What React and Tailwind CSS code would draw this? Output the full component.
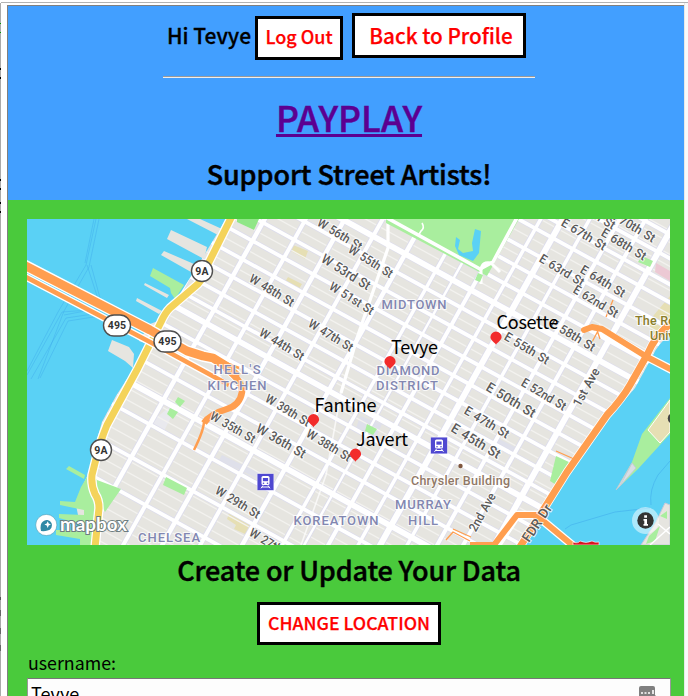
const UI_FONT = "font-['Noto_Sans_CJK_SC','Noto_Sans',sans-serif]";
const HEAVY = "font-medium [-webkit-text-stroke:0.45px_currentColor]";

// Avenue x positions measured at y = 415, with stroke widths.
const AVENUES = [
  [112, 3], [155, 4.5], [196, 4], [235, 4.5], [273, 4], [315, 4.5], [355, 3.5],
  [377, 2.5], [401, 4], [431, 3.5], [453, 6], [480, 3.5], [510, 4], [536, 4], [567, 6],
];

const lineSet = (from, to, step) => {
  const out = [];
  for (let c = from; c < to; c += step) out.push(c);
  return out;
};
const MINOR = lineSet(-246, 500, 12);
const STREETS = [-240, -210, -186, -160, -134, -110, -84, -66, -40, -18, 6, 54, 78, 102, 126, 149, 172, 192, 234, 258, 282, 342, 385, 425];
const MAJOR = [31, 210, 311];

const STREET_LABELS = [
  ["W 56th St", 340, 234, 31, 13], ["W 55th St", 371, 261, 32, 13], ["W 53rd St", 346, 272, 32, 14],
  ["W 51st St", 352, 298, 32, 13], ["W 48th St", 272, 290, 31, 13], ["W 47th St", 331, 335, 31, 13],
  ["W 44th St", 282, 344, 31, 13], ["W 39th St", 288, 410, 31, 13], ["W 35th St", 233, 427, 30, 13],
  ["W 36th St", 281, 441, 30, 14], ["W 38th St", 329, 445, 31, 13], ["W 29th St", 238, 502, 31, 13],
  ["W 27th St", 272, 544, 31, 13], ["E 67th St", 584, 234, 31, 13], ["E 70th St", 633, 226, 31, 13],
  ["E 69th St", 593, 213, 31, 13], ["E 68th St", 624, 244, 31, 13], ["E 63rd St", 562, 270, 31, 13],
  ["E 64th St", 603, 281, 31, 13], ["E 62nd St", 596, 301, 31, 13], ["E 58th St", 573, 335, 31, 13],
  ["E 55th St", 527, 348, 31, 13], ["E 52nd St", 544, 394, 31, 13], ["E 50th St", 511, 400, 31, 14],
  ["E 47th St", 487, 422, 31, 13], ["E 45th St", 476, 441, 31, 14], ["1st Ave", 586, 387, -61, 13],
  ["2nd Ave", 482, 512, -61, 13], ["FDR Dr", 537, 523, -56, 14],
];

const AREAS = [
  ["MIDTOWN", 414, 309, 65], ["DIAMOND", 408, 375, 63], ["DISTRICT", 407, 390, 62], ["HELL'S", 237, 374, 47],
  ["KITCHEN", 237, 390, 59], ["KOREATOWN", 336, 524.5, 85], ["MURRAY", 423, 509, 56], ["HILL", 423, 525, 30],
  ["CHELSEA", 169, 542, 62],
];

const ARTISTS = [
  ["Tevye", 390, 362, 391, 354, 47], ["Fantine", 313.5, 420, 314.5, 412, 62],
  ["Javert", 355.5, 454.5, 356, 446, 52], ["Cosette", 496, 337.5, 496.5, 329, 62],
];

function Shield({ x, y, label, rx, ry }) {
  return (
    <g>
      <rect x={x - rx} y={y - ry} width={rx * 2} height={ry * 2} rx={ry} fill="#fff" stroke="#4f4f4f" strokeWidth="1.4" />
      <text x={x} y={y + 3.7} textAnchor="middle" fontSize="10.5" fontWeight="700" fill="#333" letterSpacing=".2">{label}</text>
    </g>
  );
}

function Station({ x, y }) {
  return (
    <g transform={`translate(${x} ${y})`}>
      <rect x="-8.3" y="-8.3" width="16.6" height="16.6" fill="#4f48d1" stroke="#fff" strokeOpacity=".6" strokeWidth=".6" />
      <rect x="-4" y="-6" width="8" height="9" rx="1.5" fill="#fff" />
      <rect x="-2.6" y="-4" width="5.2" height="3.2" fill="#4f48d1" />
      <circle cx="-2" cy="1.2" r=".8" fill="#4f48d1" />
      <circle cx="2" cy="1.2" r=".8" fill="#4f48d1" />
      <path d="M-2.5 3.5-4.5 6.3M2.5 3.5 4.5 6.3M-3.6 5h7.2" stroke="#fff" strokeWidth="1" />
    </g>
  );
}

function CityMap() {
  const street = (c) => `M20 ${c + 11}L690 ${c + 379.5}`;
  const avenue = (x) => `M${x + 112} 215L${x - 78.4} 555`;
  const d9A = "M232 216L207 266Q204 277 198 284L170 308Q165 313 161 322L137 370L107 425Q100 442 97 455L92 475Q91 485 95 494Q99 500 99 508L95 548";
  const d495a = "M22 264L150 330L187 351L203 356L213 358L226 366L238 377";
  const fdr = "M680 318Q658 329 647 355L630 385Q622 399 607 415L567 472L518 550";
  return (
    <svg viewBox="27 219 643 326" className="block h-[326px] w-[643px] overflow-hidden font-['Roboto','Noto_Sans',sans-serif]">
      <rect x="27" y="219" width="643" height="326" fill="#e6e5e0" />
      <g fill="#e6dfb4">
        <path d="M293 245l15 6-3 8-14-8zM288 277l14 7-3 5-14-7z" />
        <path d="M230 511l27 15-3 12-20-9 2-4-9-6z" />
        <path d="M670 296v40h-16l-6-14z" />
      </g>
      <path d="M155 419l13-11 5 5-9 18-12-7z" fill="#e9e9ee" />
      <path d="M222 455l46 22-3 5-46-22zM495 437l22 11-2 5-22-11zM360 416l22 8-7 15-20-7z" fill="#dfe0ea" />
      <g fill="none" stroke="#f3f2ef" strokeWidth="1.3">{MINOR.map((c) => <path key={c} d={street(c)} />)}</g>
      <g fill="none" stroke="#dcdcec">
        {STREETS.map((c) => <path key={c} d={street(c)} strokeWidth="5.2" />)}
        {MAJOR.map((c) => <path key={c} d={street(c)} strokeWidth="7" />)}
        {AVENUES.map(([x, w]) => <path key={x} d={avenue(x)} strokeWidth={w + 1.6} />)}
      </g>
      <g fill="none" stroke="#fff">
        {STREETS.map((c) => <path key={c} d={street(c)} strokeWidth="3.8" />)}
        {MAJOR.map((c) => <path key={c} d={street(c)} strokeWidth="5.8" />)}
        {AVENUES.map(([x, w]) => <path key={x} d={avenue(x)} strokeWidth={w} />)}
        <path d="M388 219V248L357 338L341 393" strokeWidth="3.2" />
        <path d="M341 393L326 475L300 548" strokeWidth="1.6" strokeOpacity=".7" />
      </g>
      <path d="M386 219H519L487 276 386 223z" fill="#a9ee9e" />
      <path d="M380 214L480 269L493 262L519 214" stroke="#fff" strokeWidth="3.6" fill="none" />
      <path d="M481 284V270q1-9 10-7l9 9" stroke="#fff" strokeWidth="3" fill="none" />
      <g fill="#a9ee9e">
        <path d="M237 219h22l-5 11-17-8z" fill="#8fe687" />
        <path d="M478 273l5 2-3 7-5-2zM642 256l11 5-3 6-12-5zM178 397l7 4-5 6-5-5zM170 408l8 4-5 7-6-5zM367 424l10 5-4 6-8-4zM166 477l21 11-3 7-21-10z" />
        <path d="M556 456l15 7-13 23-8-5z" />
      </g>
      <path d="M422 223q3 5-1 8l-3 5" stroke="#fff" strokeWidth="1.6" fill="none" />
      <path d="M456 237l4 3-2 9 5 4 10-2-1-8 3-14 6 2-2 22-6 8-14-6-4-9z" fill="#5ad1f5" />
      <path d="M656 263l14 8v10l-15-9z" fill="#ecc9d4" />

      {/* Hudson River and its piers */}
      <path d="M27 219H226L200 262L176 300L157 325L138 362L116 396L102 422L94 450L90 470L82 487L76 505L84 545H27z" fill="#5ad1f5" />
      <path d="M102 418L96 450L90 472L81 487L75 502L60 501V505L84 510V515L59 514V518L84 525V530L56 530V535L80 539V545H96L99 500 91 480z" fill="#a9ee9e" />
      <path d="M69 466l16 9-1 4-18-10zM153 268l31 17-9 14-4-6-1-5-20-12z" fill="#a9ee9e" />
      <path d="M187 219h13l22 10-4 6zM171 230l36 17-3 12-37-20zM164 251l30 13-3 8-30-17zM145 283l24 12-2 3-23-13zM137 298l25 13-3 3-23-13zM112 340l17 7 5 7-1 14-8-7-17-10zM150 324l8-3-9 23-10-3z" fill="#e6e5e0" />
      <g fill="none" stroke="#3da8ea" strokeOpacity=".5" strokeWidth=".8">
        <path d="M96 219L86 265L58 312L27 371M99 219L89 267L64 311L38 379M94 219L85 263M87 265L101 308L64 315M91 265L103 309L62 312L27 375M100 313L66 318L31 379M100 316L68 321L40 378" />
      </g>
      <path d="M90 470L92 488 105 512 121 489 97 480z" fill="#a9ee9e" />

      {/* East River, Roosevelt Island and the far shore */}
      <path d="M680 330Q661 337 652 357L635 388L609 418L570 474L521 548H680z" fill="#5ad1f5" />
      <path d="M670 398L642 434L632 462L616 490L638 469L670 434z" fill="#a9ee9e" />
      <path d="M670 400L648 430L660 443 670 432z" fill="#e6dfb4" stroke="#fff" strokeWidth="1" />
      <path d="M632 463l4 5-16 18-4 4zM632 463l-12 23" fill="#d9dee5" stroke="#bfc9d4" strokeWidth=".8" />
      <path d="M641 545L656 522 665 503 670 505V545z" fill="#e6e5e0" stroke="#c7c9d8" />
      <path d="M649 536l11-10-5 15-9 3zM660 516l7-5v8z" fill="#a9ee9e" />
      <path d="M650 545l20-18M658 524l12 10" stroke="#fff" strokeWidth="1.4" />
      <path d="M565 529L571 525 615 512 650 508M651 505Q649 490 658 475L670 461" fill="none" stroke="#3da8ea" strokeOpacity=".7" strokeWidth=".7" />

      {/* West Side Highway */}
      <path d={d9A} fill="none" stroke="#fff" strokeWidth="9.5" />
      <path d={d9A} fill="none" stroke="#f4d35a" strokeWidth="7" />

      {/* Lincoln Tunnel approach */}
      <g fill="none" strokeLinejoin="round">
        <path d="M22 275L150 342L220 380" stroke="#fff" strokeWidth="7.5" />
        <path d={d495a} stroke="#fff" strokeWidth="11.5" />
        <path d={d495a} stroke="#ff9e4f" strokeWidth="8.8" />
        <path d="M22 275L150 342L220 380L229 385" stroke="#ff9e4f" strokeWidth="4.6" />
        <path d="M225 368Q243 381 242 392Q240 405 227 409Q210 414 204 423" stroke="#ff9e4f" strokeWidth="6.5" />
        <path d="M204 421Q204 430 194 450M218 360l21 8" stroke="#ff9e4f" strokeWidth="2.5" />
      </g>

      {/* FDR Drive, tunnel and bridge */}
      <g fill="none" stroke="#fff" strokeWidth="8.5" strokeLinejoin="round">
        <path d={fdr} />
        <path d="M495 548L517 515H536L577 549M597 328L647 357L680 374" />
      </g>
      <g fill="none" stroke="#ff9e4f" strokeLinejoin="round">
        <path d={fdr} strokeWidth="7" />
        <path d="M470 545H494L517 515H536L577 549" strokeWidth="6" />
        <path d="M584 330l8-3 10 2L647 357L680 374" strokeWidth="6" strokeLinecap="round" />
        <path d="M597 330l3 9M592 342l7-13M613 300l-7 17M556 451l18 8M453 529l18 8M446 540l7-8 17 9" strokeWidth="1.3" />
      </g>
      <path d="M573 542q5 2 7-1 6 3 12 0 3 2 7 1v3h-26z" fill="#d9141e" stroke="#fff" strokeWidth=".6" />

      <g textAnchor="middle" fontWeight="500" fill="#8287b1" stroke="#fff" strokeOpacity=".75" strokeWidth="2" paintOrder="stroke">
        {AREAS.map(([t, x, y, w]) => <text key={t} x={x} y={y} fontSize="13" textLength={w}>{t}</text>)}
      </g>
      <g textAnchor="middle" fontWeight="500" fill="#5a5a5a" stroke="#fff" strokeOpacity=".8" strokeWidth="2" paintOrder="stroke">
        {STREET_LABELS.map(([t, x, y, r, s]) => (
          <text key={t} transform={`translate(${x} ${y}) rotate(${r})`} y="4.6" fontSize={s - 0.5} textLength={t.length === 9 ? (s === 14 ? 55 : 50) : 42} lengthAdjust="spacingAndGlyphs" style={{ wordSpacing: "1px" }}>{t}</text>
        ))}
      </g>
      <circle cx="460.5" cy="466" r="2.2" fill="#80573f" />
      <g fontWeight="500" fontSize="12.5" stroke="#fff" strokeOpacity=".8" strokeWidth="2" paintOrder="stroke">
        <text x="411" y="484.5" fill="#907866" textLength="99">Chrysler Building</text>
        <text x="635" y="324.5" fill="#8a7d2c" letterSpacing=".2">The Rockefeller</text>
        <text x="650" y="339.5" fill="#8a7d2c">University</text>
      </g>
      <Shield x={202} y={271} rx={10.5} ry={10.5} label="9A" />
      <Shield x={101} y={450} rx={10.5} ry={10.5} label="9A" />
      <Shield x={117} y={325.5} rx={13.5} ry={10.5} label="495" />
      <Shield x={167.5} y={341.5} rx={13.5} ry={10.5} label="495" />
      <Station x={265.5} y={482} />
      <Station x={439} y={445.5} />
      <path d="M670 414a4 5 0 0 0 0 9z" fill="#444" />

      {ARTISTS.map(([name, px, py, x, y, w]) => (
        <g key={name}>
          <path transform={`translate(${px} ${py})`} d="M0 7.2C-1.2 4.8-5.6 3-5.6-.5A5.6 5.4 0 0 1 5.6-.5C5.6 3 1.2 4.8 0 7.2z" fill="#f22b2b" />
          <text x={x} y={y} fontSize="18" textLength={w} fill="#000" className="font-['Noto_Sans_CJK_SC',sans-serif]">{name}</text>
        </g>
      ))}

      <circle cx="46.3" cy="525" r="10.6" fill="#fff" stroke="#3d8ba5" strokeOpacity=".5" />
      <path d="M41 531q-1.500-7 2-9.500a5.300 5.300 0 1 1 4.500 9q-3 1-6.500.5z" fill="#3089a5" />
      <path d="M47.700 521.300l1 2.300 2.300 1-2.300 1-1 2.300-1-2.300-2.300-1 2.300-1z" fill="#fff" />
      <text x="60" y="530.5" fontSize="18" fontWeight="700" textLength="67" lengthAdjust="spacingAndGlyphs" fill="#fff" stroke="#6d7d80" strokeWidth="2" paintOrder="stroke" className="font-['Lato',sans-serif]">mapbox</text>
      <circle cx="645.5" cy="520.500" r="13.500" fill="#fff" fillOpacity=".5" />
      <circle cx="645.5" cy="520.500" r="8.200" fill="#333" />
      <path d="M644.200 515.200h2.800v2.500h-2.800zM643.500 519h3.500v5h1v1.800h-4.500V524h.8v-3.200h-.8z" fill="#fff" />
    </svg>
  );
}

function BoxButton({ className, children }) {
  return (
    <button className={`box-border shrink-0 border-[3px] border-black bg-white font-medium whitespace-nowrap text-[#ff0000] [-webkit-text-stroke:0.25px_currentColor] ${className}`}>
      {children}
    </button>
  );
}

export default function App() {
  return (
    <div className={`flex h-[696px] w-[688px] flex-col overflow-hidden bg-white text-black ${UI_FONT}`}>
      <div className="ml-px h-[3px] shrink-0 border-b border-[#b3b3b3]" />
      <div className="flex min-h-0 grow">
        <div className="flex w-px shrink-0 flex-col bg-[#aaa]">
          <div className="mt-5 h-px bg-[#009900]" />
          <div className="mt-[8px] h-px bg-[#009900]" />
          <div className="mt-[35px] h-[2px] bg-black" />
          <div className="mt-[7px] h-[2px] bg-black" />
          <div className="mt-[100px] h-[2px] bg-black" />
          <div className="mt-[7px] h-[2px] bg-black" />
          <div className="mt-[12px] h-[2px] bg-black" />
          <div className="mt-[7px] h-[2px] bg-black" />
          <div className="mt-[384px] h-[3px] bg-[#555]" />
          <div className="mt-[10px] h-[6px] bg-[#666]" />
          <div className="mt-[12px] h-[6px] bg-[#666]" />
          <div className="mt-[11px] h-[6px] bg-[#666]" />
        </div>
        <main className="mt-[2px] ml-[6px] flex w-[677px] shrink-0 flex-col border-t border-l border-[#808080] bg-[#4aca3c]">
          <header className="flex h-[194px] shrink-0 flex-col items-center bg-[#429fff]">
            <div className="flex h-[70px] w-full items-start pl-[159px]">
              <span className="mt-[13px] w-[88px] text-[21px] leading-[32px] font-medium whitespace-nowrap [-webkit-text-stroke:0.3px_currentColor]">Hi Tevye</span>
              <BoxButton className="mt-[10px] h-[44px] w-[88px] pb-[3px] text-[18px]">Log Out</BoxButton>
              <BoxButton className="mt-[7px] ml-[9px] h-[45px] w-[174px] pl-[4px] text-[20.7px]">Back to Profile</BoxButton>
            </div>
            <hr className="mr-[-6px] ml-0 h-[2px] w-[372px] border-t border-b border-t-[#9a9a9a] border-b-[#eee]" />
            <a className={`mr-[-6px] mt-[12px] text-[35.5px] leading-[54px] text-[#5c0091] underline decoration-[3px] underline-offset-[2px] ${HEAVY}`}>PAYPLAY</a>
            <h2 className={`mr-[-6px] mt-[9px] text-[27px] leading-[42px] tracking-[-0.1px] ${HEAVY}`}>Support Street Artists!</h2>
          </header>
          <section className="flex flex-col pt-[19px] pr-[13px] pl-[19px]">
            <CityMap />
            <h2 className={`mt-[4px] text-center text-[27px] leading-[42px] tracking-[-0.15px] ${HEAVY}`}>Create or Update Your Data</h2>
            <BoxButton className="mt-[11px] h-[43px] w-[184px] self-center pb-[2px] text-[17.7px]">CHANGE LOCATION</BoxButton>
            <label className="mt-[3px] pl-px text-[17.8px] leading-[29px]">username:</label>
            <div className="mt-px flex h-[40px] justify-between border border-t-[#777] border-[#999] bg-[#fdfdfd] pr-[13px] pl-[3px]">
              <span className="text-[18px] leading-[29px]">Tevye</span>
              <svg viewBox="0 0 18 18" className="mt-[7px] h-[18px] w-[18px]">
                <rect width="16" height="15" rx="2" fill="#808080" />
                <path d="M2 7h2M5.500 7h2M9 7h2M14 4v4" stroke="#fff" strokeWidth="1.6" />
                <path d="M12 14l5-5v5z" fill="#808080" />
              </svg>
            </div>
          </section>
        </main>
        <div className="w-[4px] shrink-0 border-l border-[#e8e8e8] bg-[#fafafa]" />
      </div>
    </div>
  );
}
